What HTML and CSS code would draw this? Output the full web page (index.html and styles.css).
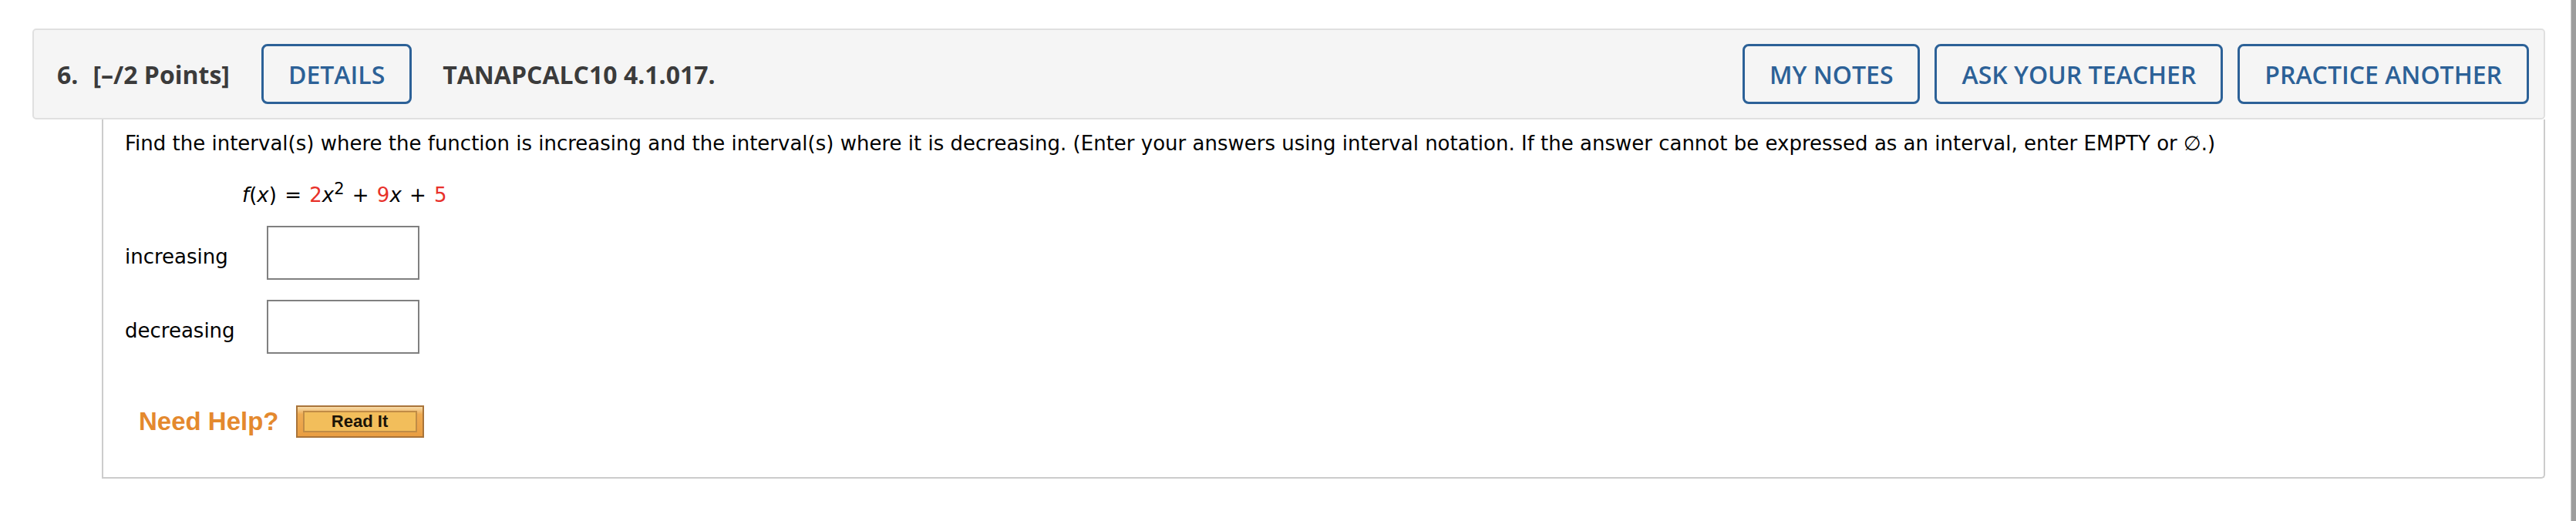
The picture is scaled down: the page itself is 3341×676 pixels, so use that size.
FILE: index.html
```html
<!DOCTYPE html>
<html lang="en">
<head>
  <meta charset="UTF-8">
  <title>Question 6 - TANAPCALC10 4.1.017</title>
  <link rel="stylesheet" href="styles.css">
</head>
<body>

<div id="page">
  <!-- Question header -->
  <div class="q-header">
    <span class="q-num">6.</span>
    <span class="q-points">[&ndash;/2 Points]</span>
    <button class="hdr-btn">DETAILS</button>
    <span class="q-ref">TANAPCALC10 4.1.017.</span>
    <div class="hdr-actions">
      <button class="hdr-btn">MY NOTES</button>
      <button class="hdr-btn">ASK YOUR TEACHER</button>
      <button class="hdr-btn">PRACTICE ANOTHER</button>
    </div>
  </div>

  <!-- Question body -->
  <div class="q-body">
    <p class="q-text">Find the interval(s) where the function is increasing and the interval(s) where it is decreasing. (Enter your answers using interval notation. If the answer cannot be expressed as an interval, enter EMPTY or &empty;.)</p>

    <p class="q-func"><i>f</i>(<i>x</i>) <span class="op">=</span> <span class="red">2</span><i>x</i><sup>2</sup> <span class="op">+</span> <span class="red">9</span><i>x</i> <span class="op">+</span> <span class="red">5</span></p>

    <div class="answer-row">
      <label class="answer-label" for="inc">increasing</label>
      <input class="answer-box" id="inc" type="text">
    </div>
    <div class="answer-row">
      <label class="answer-label" for="dec">decreasing</label>
      <input class="answer-box" id="dec" type="text">
    </div>

    <div class="help-row">
      <span class="need-help">Need Help?</span>
      <button class="read-it"><span>Read It</span></button>
    </div>
  </div>
</div>

<div class="page-edge"></div>

</body>
</html>
```

FILE: styles.css
```css
body {
  margin: 0;
  display: flex;
  height: 100vh;
  overflow: hidden;
  background: white;
  font-family: "DejaVu Sans", Verdana, sans-serif;
  color: #000;
}

#page {
  flex: 1;
  padding: 37px 33px 0 42px;
}

.page-edge {
  width: 6px;
  background: #9d9d9d;
  border-left: 1px solid #c8c8c8;
}

.q-header {
  display: flex;
  align-items: center;
  height: 114px;
  padding: 0 19px 0 30px;
  background: #f5f5f5;
  border: 2px solid #e0e0e0;
  border-radius: 5px;
  font-family: "Open Sans", sans-serif;
  font-size: 32px;
}

.q-num {
  font-weight: 700;
  color: #3b3b3b;
}

.q-points {
  margin-left: 19px;
  font-weight: 700;
  color: #3b3b3b;
}

.q-ref {
  margin-left: 40px;
  font-weight: 700;
  color: #3b3b3b;
}

.hdr-btn {
  height: 78px;
  padding: 0 32px;
  margin-left: 41px;
  background: transparent;
  border: 3px solid #2c6197;
  border-radius: 8px;
  font-family: "Open Sans", sans-serif;
  font-size: 32px;
  font-weight: 600;
  color: #2c6197;
  cursor: pointer;
}

.hdr-actions {
  margin-left: auto;
  display: flex;
  gap: 19px;
}

.hdr-actions .hdr-btn {
  margin-left: 0;
}

.q-body {
  margin-left: 90px;
  padding: 15px 28px 51px;
  border: 2px solid #cccccc;
  border-top: none;
  border-radius: 0 0 5px 0;
  font-size: 26px;
  line-height: 32px;
}

.q-text {
  margin: 0;
}

.q-func {
  margin: 35px 0 0 152px;
}

.q-func .op {
  margin: 0 2px;
}

.q-func sup {
  font-size: 21px;
  line-height: 0;
}

.red {
  color: #e8312a;
}

.answer-row {
  display: flex;
  align-items: center;
  margin-top: 24px;
}

.answer-row + .answer-row {
  margin-top: 26px;
}

.answer-label {
  width: 184px;
  padding-top: 9px;
}

.answer-box {
  box-sizing: border-box;
  width: 198px;
  height: 70px;
  margin: 0;
  border: 2px solid #808080;
  background: white;
}

.help-row {
  display: flex;
  align-items: center;
  margin-top: 67px;
  padding-left: 18px;
}

.need-help {
  font-family: "Liberation Sans", Arial, sans-serif;
  font-weight: 700;
  font-size: 33px;
  line-height: 40px;
  color: #e4892e;
}

.read-it {
  box-sizing: border-box;
  width: 166px;
  height: 42px;
  margin-left: 22px;
  padding: 5px 7px;
  border: 2px solid #a9743a;
  border-radius: 0;
  background: linear-gradient(#f7dcaa 0, #eeab52 25%, #e99e43 100%);
  cursor: pointer;
}

.read-it span {
  display: block;
  height: 100%;
  box-sizing: border-box;
  border: 2px solid #c08c46;
  background: #f2be5b;
  font-family: "Liberation Sans", Arial, sans-serif;
  font-weight: 700;
  font-size: 22px;
  line-height: 24px;
  color: #1b1408;
}
```
